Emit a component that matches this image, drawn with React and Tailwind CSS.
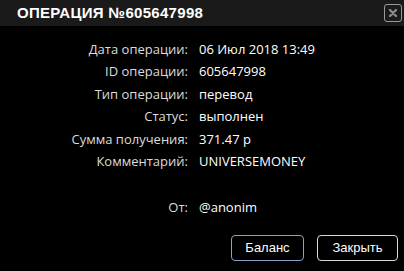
import React from "react";

const rows = [
  ["Дата операции:", "06 Июл 2018 13:49"],
  ["ID операции:", "605647998"],
  ["Тип операции:", "перевод"],
  ["Статус:", "выполнен"],
  ["Сумма получения:", "371.47 р"],
  ["Комментарий:", "UNIVERSEMONEY"],
];

const App = () => {
  return (
    <div className="w-[404px] h-[271px] bg-black text-white flex flex-col overflow-hidden">
      <div className="h-[26px] bg-[#1a1a1a] flex items-center justify-between pl-[17px] pr-[2px]">
        <h1 className="text-[15px] font-bold tracking-[0.3px] text-white font-['Liberation_Sans',sans-serif]">
          ОПЕРАЦИЯ №605647998
        </h1>
        <button className="w-[18px] h-[18px] border border-[#9a9a9a] rounded-[3px] flex items-center justify-center">
          <svg width="10" height="10" viewBox="0 0 10 10">
            <path d="M2 2 L8 8 M8 2 L2 8" stroke="#8a8a8a" strokeWidth="2.4" strokeLinecap="round" />
          </svg>
        </button>
      </div>

      <div className="flex-1 flex flex-col pt-[12px] font-['Open_Sans',sans-serif] text-[13px]">
        {rows.map(([label, value]) => (
          <div key={label} className="flex h-[22.5px] items-center">
            <span className="w-[188px] text-right text-[#dcdcdc]">{label}</span>
            <span className="ml-[11px] text-white">{value}</span>
          </div>
        ))}
        <div className="flex h-[22.5px] items-center mt-[23px]">
          <span className="w-[188px] text-right text-[#dcdcdc]">От:</span>
          <span className="ml-[11px] text-white">@anonim</span>
        </div>

        <div className="flex justify-end gap-[13px] pr-[6px] mt-[16px] font-['Liberation_Sans',sans-serif]">
          <button className="w-[73px] h-[26px] rounded-[4px] border border-[#8aa0c8] text-[13px] text-white">
            Баланс
          </button>
          <button className="w-[81px] h-[26px] rounded-[4px] border border-[#d8d8d8] text-[13px] text-white">
            Закрыть
          </button>
        </div>
      </div>
    </div>
  );
};

export default App;
